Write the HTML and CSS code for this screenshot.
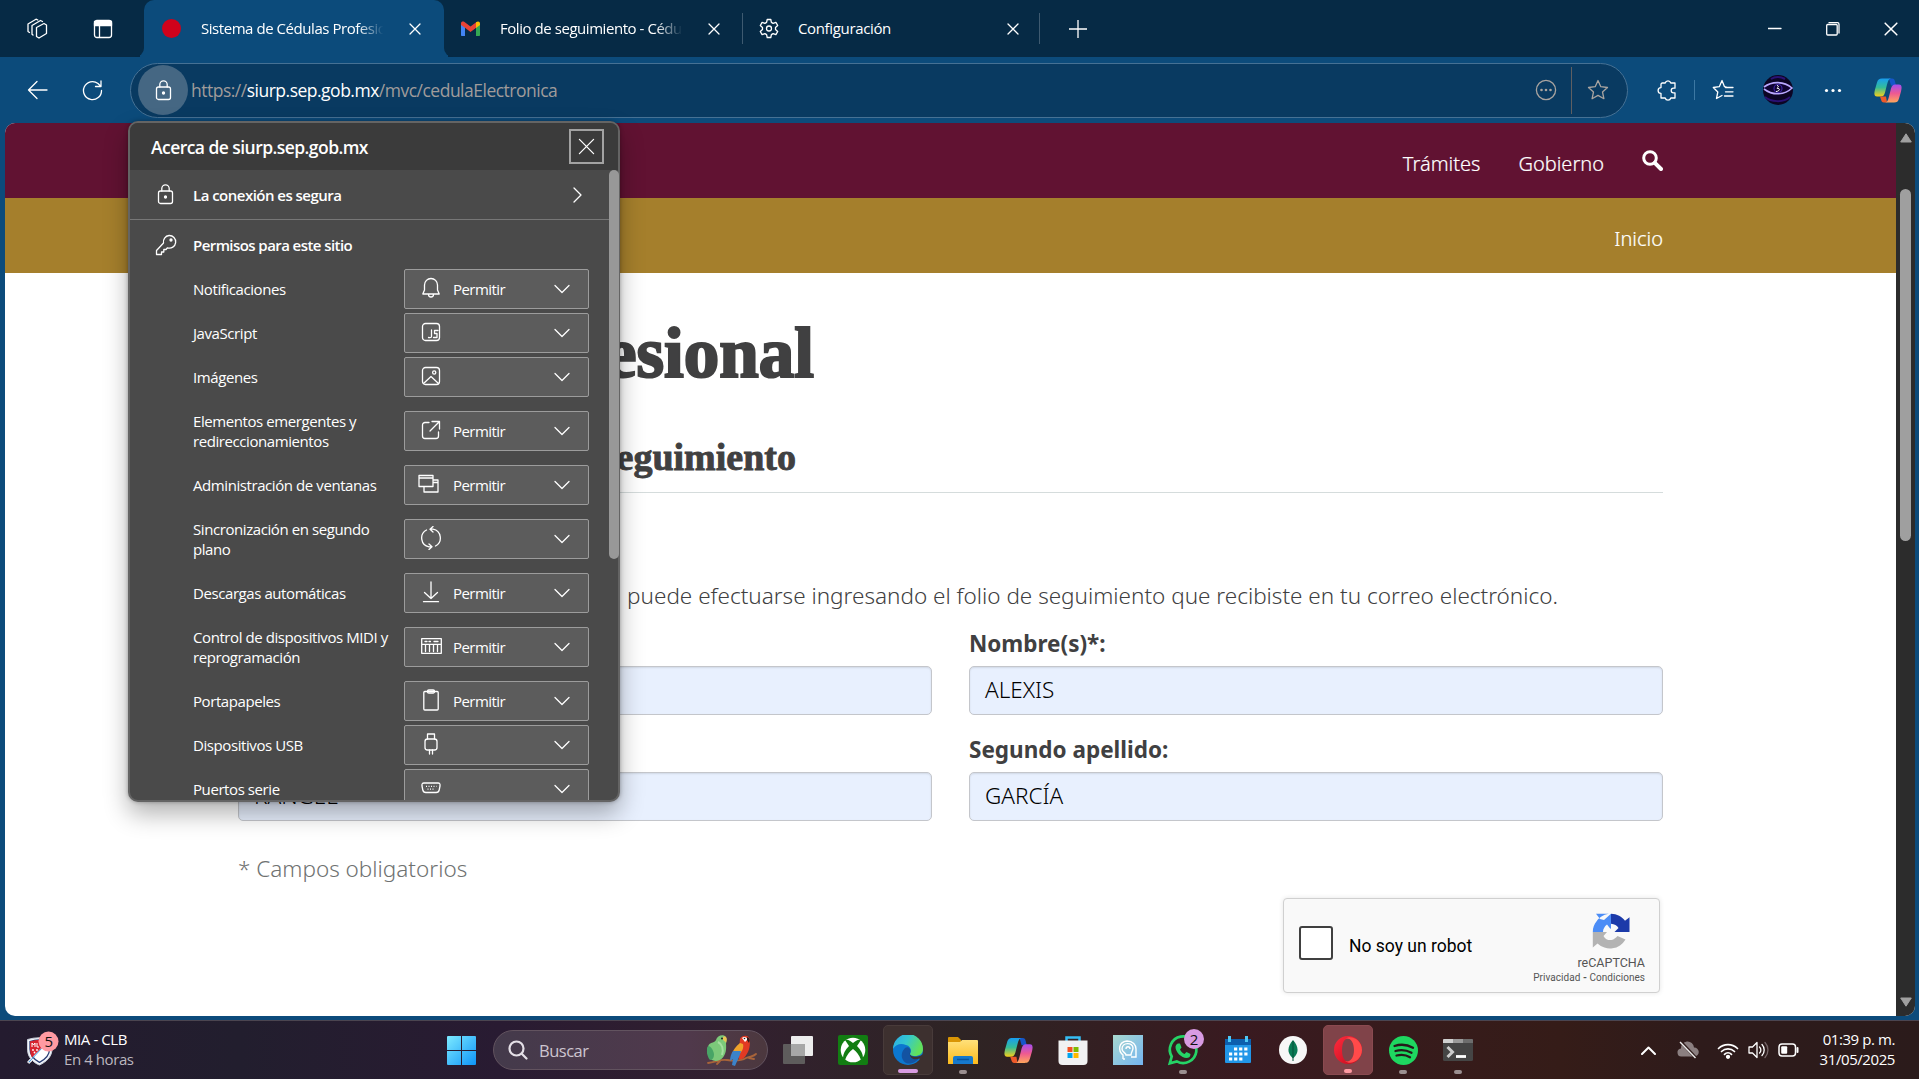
FILE: index.html
```html
<!DOCTYPE html>
<html lang="es">
<head>
<meta charset="utf-8">
<title>Sistema de Cédulas Profesionales</title>
<link rel="stylesheet" href="styles.css">
</head>
<body>
<svg class="defs" width="0" height="0">
  <defs>
    <linearGradient id="cpBlue" x1="0" y1="0" x2="0" y2="1"><stop offset="0" stop-color="#189df0"/><stop offset=".5" stop-color="#35bd98"/><stop offset="1" stop-color="#f6cf19"/></linearGradient>
    <linearGradient id="cpPink" x1="0" y1="0" x2="0" y2="1"><stop offset="0" stop-color="#a44ef0"/><stop offset=".5" stop-color="#ee5a91"/><stop offset="1" stop-color="#ffa65c"/></linearGradient>
    <linearGradient id="win" x1="0" y1="0" x2="1" y2="1"><stop offset="0" stop-color="#7deaff"/><stop offset="1" stop-color="#0e94f8"/></linearGradient>
    <linearGradient id="edgeTop" x1="0" y1="0" x2="1" y2=".4"><stop offset="0" stop-color="#2aa8ea"/><stop offset=".5" stop-color="#34c8cf"/><stop offset="1" stop-color="#62e05a"/></linearGradient>
    <linearGradient id="folder" x1="0" y1="0" x2="0" y2="1"><stop offset="0" stop-color="#ffe07a"/><stop offset="1" stop-color="#fdbb1c"/></linearGradient>
    <linearGradient id="opera" x1="0" y1="0" x2="1" y2="1"><stop offset="0" stop-color="#ff2b3d"/><stop offset="1" stop-color="#c20a1c"/></linearGradient>
    <linearGradient id="ai" x1="0" y1="0" x2="1" y2="1"><stop offset="0" stop-color="#a8d8cf"/><stop offset="1" stop-color="#74b4f0"/></linearGradient>
    <symbol id="x" viewBox="0 0 12 12"><path d="M1 1l10 10M11 1L1 11"/></symbol>
    <symbol id="down" viewBox="0 0 16 10"><path d="M1 1.500l7 7 7-7"/></symbol>
    <symbol id="lock" viewBox="0 0 16 21"><rect x="1" y="7" width="14" height="12.500" rx="2"/><path d="M4.300 7V4.500a3.700 3.700 0 0 1 7.400 0V7"/><circle cx="8" cy="13" r="1" fill="#fff"/></symbol>
    <symbol id="copilot" viewBox="0 0 28 26">
      <path d="M15 1h3c2 0 2.500 1 3 3l1 4h-5z" fill="#1556c9"/>
      <path d="M8 1h9c-2 0-3 2-4 6l-2 8c-1 3-2 4-4 4H3c-3 0-3-3-2-7l2-7c1-3 2-4 5-4z" fill="url(#cpBlue)"/>
      <path d="M13 25h-3c-2 0-2.500-1-3-3l-1-3h6z" fill="#ee5a2a"/>
      <path d="M20 25h-9c2 0 3-2 4-6l2-8c1-3 2-4 4-4h4c3 0 3 3 2 7l-2 7c-1 3-2 4-5 4z" fill="url(#cpPink)"/>
    </symbol>
  </defs>
</svg>

<div class="tabstrip">
  <div class="strip-left">
    <svg class="ic" width="22" height="22" viewBox="0 0 22 22"><path d="M10.500 9.500l7.500-4 2.500 1.500v8.500l-7.500 4.500-2.500-1.500zM7 17l-1-.8V7.500l8.500-5 2 1M3.500 14.500L2 13.500V6l8-4.800 1.800.8"/></svg>
    <svg class="ic" width="20" height="20" viewBox="0 0 20 20"><rect x="1.500" y="1.500" width="17" height="17" rx="2.500"/><path d="M1.500 2.500h17v4h-17z" fill="#fff"/><path d="M6.500 6v12"/></svg>
  </div>
  <div class="tab tab-active">
    <span class="red-dot"></span>
    <span class="tab-title fade-a">Sistema de Cédulas Profesio</span>
    <svg class="ic tab-x" width="12" height="12"><use href="#x"/></svg>
  </div>
  <div class="tab tab-gmail">
    <svg width="19" height="15" viewBox="0 0 19 15"><path d="M0 2v12c0 .6.400 1 1 1h3V6z" fill="#4285f4"/><path d="M19 2v12c0 .6-.4 1-1 1h-3V6z" fill="#34a853"/><path d="M0 2.500C0 .5 2 0 3.500 1L9.500 5.500 15.500 1v5.500l-6 4.500L4 6.800 0 4z" fill="#ea4335"/><path d="M15 1.300C17-.3 19 .6 19 2.500V4l-4 3z" fill="#fbbc04"/></svg>
    <span class="tab-title fade-b">Folio de seguimiento - Cédu</span>
    <svg class="ic tab-x" width="12" height="12"><use href="#x"/></svg>
  </div>
  <div class="tab tab-conf">
    <svg class="ic" width="22" height="22" viewBox="0 0 22 22"><path d="M9.200 1.500h3.600l.6 2.900 1.700 1 2.800-1 1.800 3.100-2.200 2v2l2.200 2-1.800 3.100-2.800-1-1.700 1-.6 2.900H9.200l-.6-2.900-1.700-1-2.800 1-1.800-3.100 2.200-2v-2l-2.200-2 1.800-3.100 2.800 1 1.700-1z"/><circle cx="11" cy="10.500" r="2.500"/></svg>
    <span class="tab-title conf-title">Configuración</span>
    <svg class="ic tab-x" width="12" height="12"><use href="#x"/></svg>
  </div>
  <svg class="ic plus" width="18" height="18" viewBox="0 0 18 18"><path d="M9 0v18M0 9h18"/></svg>
  <div class="win-buttons">
    <svg class="ic" width="14" height="14" viewBox="0 0 14 14"><path d="M0 6.500h13"/></svg>
    <svg class="ic" width="14" height="14" viewBox="0 0 14 14"><rect x=".7" y="2.500" width="10.500" height="10.500" rx="1"/><path d="M3 .7h8.500a1.500 1.500 0 0 1 1.500 1.500V11"/></svg>
    <svg class="ic" width="14" height="14" viewBox="0 0 12 12"><use href="#x"/></svg>
  </div>
</div>

<div class="toolbar">
  <svg class="ic back" width="21" height="20" viewBox="0 0 21 20"><path d="M20 10H1.500M10 1.500L1.500 10l8.500 8.500"/></svg>
  <svg class="ic reload" width="21" height="21" viewBox="0 0 21 21"><path d="M19.500 10.500a9 9 0 1 1-3.500-7l2.500 2.500M19 1v5.500h-5.500"/></svg>
  <div class="address">
    <span class="lock-circle"><svg class="ic" width="17" height="21"><use href="#lock"/></svg></span>
    <span class="url">https://<b>siurp.sep.gob.mx</b>/mvc/cedulaElectronica</span>
    <svg class="ic dim" width="22" height="22" viewBox="0 0 22 22"><circle cx="11" cy="11" r="9.600"/><g fill="#a9a4a0" stroke="none"><circle cx="6.500" cy="11" r="1.300"/><circle cx="11" cy="11" r="1.300"/><circle cx="15.500" cy="11" r="1.300"/></g></svg>
    <span class="addr-sep"></span>
    <svg class="ic dim" width="22" height="22" viewBox="0 0 22 22"><path d="M11 1.500l2.800 6.200 6.700.8-5 4.500 1.400 6.700-5.900-3.300-5.900 3.300L6.500 13l-5-4.500 6.700-.8z"/></svg>
  </div>
  <div class="tools">
    <svg class="ic t-puzzle" width="20" height="22" viewBox="0 0 20 22"><path d="M5 4h3.200a2.900 2.900 0 0 1 5.600 0H18v5.200h-1.500a2.300 2.300 0 0 0 0 4.600H18V19h-4.200a2.900 2.900 0 0 1-5.600 0H4v-4.600a2.900 2.900 0 0 1 0-5.800V5z"/></svg>
    <span class="tool-sep"></span>
    <svg class="ic t-fav" width="22" height="22" viewBox="0 0 22 22"><path d="M14 8l-1.500-.3L10 1.500 7.300 7.700l-6 .8 4.500 4.500-1.300 6.500 5.500-3M13.500 8.500H21M13.500 12.800H21M12.500 17H21"/></svg>
    <svg class="t-avatar" width="30" height="30" viewBox="0 0 30 30"><circle cx="15" cy="15" r="15" fill="#0c0524"/><path d="M2 22c6 5 18 6 25 0M8 4c5-3 10-2 14 0" stroke="#2a1175" stroke-width="2" fill="none"/><path d="M1 12c8-6 20-6 28 1-7 7-19 8-28 1" fill="#100432" stroke="#b9a8ff" stroke-width="1.600"/><circle cx="15" cy="13.500" r="4" fill="none" stroke="#3b24a0" stroke-width="1.200"/><path d="M14 10.500c4 1-2 3 1 3s1 3-2 3" stroke="#fff" fill="none"/></svg>
    <svg class="t-more" width="18" height="5" viewBox="0 0 18 5" fill="#fff"><circle cx="2.500" cy="2.500" r="1.600"/><circle cx="9" cy="2.500" r="1.600"/><circle cx="15.500" cy="2.500" r="1.600"/></svg>
    <svg class="t-copilot" width="28" height="27"><use href="#copilot"/></svg>
  </div>
</div>

<div class="viewport">
  <main class="page">
    <nav class="nav-main">
      <span>Trámites</span><span>Gobierno</span>
      <svg width="21" height="21" viewBox="0 0 21 21" fill="none" stroke="#fff"><circle cx="8" cy="8" r="6.300" stroke-width="3"/><path d="M12.800 12.800l6.200 6.200" stroke-width="4" stroke-linecap="round"/></svg>
    </nav>
    <nav class="nav-sub"><span>Inicio</span></nav>
    <div class="container">
      <h1>esional</h1>
      <h2>eguimiento</h2>
      <p class="intro">puede efectuarse ingresando el folio de seguimiento que recibiste en tu correo electrónico.</p>
      <div class="fields">
        <div class="group"><span class="field"></span></div>
        <label class="group">Nombre(s)*:<span class="field">ALEXIS</span></label>
        <div class="group"><span class="field">RANGEL</span></div>
        <label class="group">Segundo apellido:<span class="field">GARCÍA</span></label>
      </div>
      <p class="required">* Campos obligatorios</p>
      <div class="captcha">
        <span class="check"></span>
        <span class="robot">No soy un robot</span>
        <div class="brand">
          <svg width="38" height="38" viewBox="0 0 38 38"><path d="M19 .8C13 .8 8 3.500 4.800 8 2 11 .8 15 .8 19H11c0-3 1.500-5.500 4-7.500l3.500 4.500.5-1zM4 .8h15L12 7 8 6z" fill="#4c8df6"/><path d="M19 .8c6 0 11 3 14 7l4.500-3.500V19H22.500l4-4c-1.500-2.500-4-4-7.500-4.300z" fill="#1c3aa9"/><path d="M.8 19H15l-3.500 4c2 3.500 5 4.500 8 4 2.500-.5 4-2 6-4l8 3.500a18 18 0 0 1-28 4l-4.700 4z" fill="#b3b3b3"/></svg>
          <span class="rc">reCAPTCHA</span>
          <span class="terms">Privacidad <b>-</b> Condiciones</span>
        </div>
      </div>
    </div>
  </main>
  <div class="scrollbar">
    <svg width="12" height="10" viewBox="0 0 12 10"><path d="M6 .8L11.300 9H.7z" fill="#a0a0a0" stroke="#a0a0a0" stroke-linejoin="round"/></svg>
    <span class="thumb"></span>
    <svg width="12" height="10" viewBox="0 0 12 10"><path d="M6 9.200L11.300 1H.7z" fill="#a0a0a0" stroke="#a0a0a0" stroke-linejoin="round"/></svg>
  </div>
</div>

<section class="popup">
  <header>
    <span class="about">Acerca de siurp.sep.gob.mx</span>
    <span class="close"><svg class="ic" width="17" height="17" viewBox="0 0 12 12"><path d="M1 1l10 10M11 1L1 11" stroke-width=".9"/></svg></span>
  </header>
  <div class="pop-body">
    <div class="secure"><svg class="ic" width="17" height="21"><use href="#lock"/></svg><span>La conexión es segura</span><svg class="ic" width="9" height="16" viewBox="0 0 9 16"><path d="M1 1l7 7-7 7"/></svg></div>
    <div class="perm-title"><svg class="ic" width="22" height="22" viewBox="0 0 22 22"><path d="M14 1.500a6.300 6.300 0 1 1-1.500 12.300L11 15.500H8.800V18H6.500v2.500h-5v-4l7-7.500A6.300 6.300 0 0 1 14 1.500z"/><circle cx="16" cy="6" r="1" fill="#fff"/></svg><span>Permisos para este sitio</span></div>
    <div class="perm"><span>Notificaciones</span><div class="select"><svg class="ic" width="20" height="22" viewBox="0 0 20 22"><path d="M10 1.500a6.500 6.500 0 0 0-6.500 6.500v5L1.800 17h16.400l-1.700-4V8A6.500 6.500 0 0 0 10 1.500zM7.500 17.500a2.500 2.500 0 0 0 5 0"/></svg><b>Permitir</b><svg class="ic" width="16" height="10"><use href="#down"/></svg></div></div>
    <div class="perm"><span>JavaScript</span><div class="select"><svg class="ic" width="20" height="20" viewBox="0 0 20 20"><rect x="1.500" y="1.500" width="17" height="17" rx="3"/><path d="M10.500 8v6.500q0 1.500-3 1M17 8.500h-3.500v3H16V15.500h-3.500"/></svg><b></b><svg class="ic" width="16" height="10"><use href="#down"/></svg></div></div>
    <div class="perm"><span>Imágenes</span><div class="select"><svg class="ic" width="20" height="20" viewBox="0 0 20 20"><rect x="1.500" y="1.500" width="17" height="17" rx="3"/><circle cx="13.200" cy="6.500" r="1.600"/><path d="M2.500 17.500L10 10.500l7.500 7"/></svg><b></b><svg class="ic" width="16" height="10"><use href="#down"/></svg></div></div>
    <div class="perm tall"><span>Elementos emergentes y redireccionamientos</span><div class="select"><svg class="ic" width="20" height="20" viewBox="0 0 20 20"><path d="M8 2.500H4A2.500 2.500 0 0 0 1.500 5v11A2.500 2.500 0 0 0 4 18.500h11a2.500 2.500 0 0 0 2.500-2.500v-4M11 1.500h7.500V9M18.500 1.500L9 11"/></svg><b>Permitir</b><svg class="ic" width="16" height="10"><use href="#down"/></svg></div></div>
    <div class="perm tall"><span>Administración de ventanas</span><div class="select"><svg class="ic wide" width="22" height="20" viewBox="0 0 22 20"><path d="M1 1.500h14v11H1zM1 4h14M15 6h5v12H6v-5.500M15 8.500h5"/></svg><b>Permitir</b><svg class="ic" width="16" height="10"><use href="#down"/></svg></div></div>
    <div class="perm tall"><span>Sincronización en segundo plano</span><div class="select"><svg class="ic" width="20" height="24" viewBox="0 0 20 24"><path d="M5.500 4A9 9 0 0 0 8 20.800h3M14.500 20A9 9 0 0 0 12 3.200H9M12 .5L9 3.200 12 6M8 18l3 2.800L8 23.500"/></svg><b></b><svg class="ic" width="16" height="10"><use href="#down"/></svg></div></div>
    <div class="perm tall"><span>Descargas automáticas</span><div class="select"><svg class="ic" width="20" height="22" viewBox="0 0 20 22"><path d="M10 1v16.500M3.500 11.500l6.500 6 6.500-6M2.500 20.700h15"/></svg><b>Permitir</b><svg class="ic" width="16" height="10"><use href="#down"/></svg></div></div>
    <div class="perm tall"><span>Control de dispositivos MIDI y reprogramación</span><div class="select"><svg class="ic midi" width="21" height="16" viewBox="0 0 21 16"><path d="M.7.7h19.600v14.600H.7zM.7 6.300h19.600M4.500 6.500v7M8.500 6.500v7M12.500 6.500v7M16.500 6.500v7M4 3.500h2M8 3.500h1.500M13 3.500h4"/></svg><b>Permitir</b><svg class="ic" width="16" height="10"><use href="#down"/></svg></div></div>
    <div class="perm tall"><span>Portapapeles</span><div class="select"><svg class="ic" width="20" height="22" viewBox="0 0 20 22"><rect x="2.800" y="2.500" width="14.400" height="18.500" rx="1"/><rect x="6.500" y="1" width="7" height="3" rx="1.300"/></svg><b>Permitir</b><svg class="ic" width="16" height="10"><use href="#down"/></svg></div></div>
    <div class="perm"><span>Dispositivos USB</span><div class="select"><svg class="ic" width="20" height="22" viewBox="0 0 20 22"><path d="M6.500 6V1h7v5M8.500 17v4M11.500 17v4"/><rect x="4" y="6" width="12" height="11" rx="2.500"/></svg><b></b><svg class="ic" width="16" height="10"><use href="#down"/></svg></div></div>
    <div class="perm"><span>Puertos serie</span><div class="select"><svg class="ic" width="20" height="12" viewBox="0 0 20 12"><path d="M3 1h14q2.500 0 2 3l-.8 4q-.5 2.500-3 2.500H4.800q-2.500 0-3-2.500L1 4Q.5 1 3 1z"/><path d="M5 4.300h10.500M6.500 7.200h7.500" stroke-dasharray="1 1.500" stroke-linecap="butt"/></svg><b></b><svg class="ic" width="16" height="10"><use href="#down"/></svg></div></div>
  </div>
  <span class="pop-thumb"></span>
</section>

<footer class="taskbar">
  <div class="widget">
    <svg width="46" height="40" viewBox="0 0 46 40"><path d="M6.500 10.500Q18 7 31 10.500V20c0 8-6 13-12.500 16-3-1-5-2.500-7-4.500L8 34.500 6.500 33l3-3.500C7 26 6.500 23 6.500 19z" fill="#f4f7fb" stroke="#c9cfdb" stroke-width="1"/><path d="M9 12.500Q18 9.500 28.500 12.500V20c0 6.500-4.500 10.500-10 13.300C12 30 9 26 9 20z" fill="#fff" stroke="#2b3e74" stroke-width="1.300"/><path d="M9 12.500Q18 9.500 27 12L11 28.500Q9 25 9 20z" fill="#d8232f"/><path d="M8 33L27.500 12" stroke="#3d9be0" stroke-width="1"/><path d="M11 18v-4l1.500 2 1.500-2v4M16 14v4h2" stroke="#fff" fill="none"/><g fill="#fff"><circle cx="12" cy="21" r=".9"/><circle cx="16" cy="21" r=".9"/><circle cx="13.500" cy="23.500" r=".9"/></g><circle cx="27.500" cy="12.500" r="10" fill="#ff9aa2"/><text x="23.500" y="18" class="badge-text">5</text></svg>
    <div class="two-lines"><span>MIA - CLB</span><span class="muted">En 4 horas</span></div>
  </div>
  <svg class="start" width="29" height="29" viewBox="0 0 29 29" fill="url(#win)"><path d="M0 1q0-1 1-1h13v14H0zM15 0h13q1 0 1 1v13H15zM0 15h14v14H1q-1 0-1-1zM15 15h14v13q0 1-1 1H15z"/></svg>
  <div class="search">
    <svg width="20" height="20" viewBox="0 0 20 20" fill="none" stroke="#e4dfe6" stroke-width="2.200" stroke-linecap="round"><circle cx="8.500" cy="8.500" r="7"/><path d="M13.500 13.500l5 5"/></svg>
    <span>Buscar</span>
    <svg width="52" height="32" viewBox="0 0 52 32">
      <path d="M2 29c8-1 12-4 19-3s14 1 19-2c4-2 7-1 10-4M43 24l5 1M14 27l-3 3" stroke="#a8643a" stroke-width="1.800" fill="none" stroke-linecap="round"/>
      <path d="M10 6c1-4 5-5.500 8-4.500 2.500 1 3 4 2 8 .5 6 0 11-4 15-3 3-8 3-11 1-4-4-5-11-2-15 2-2 6-2 7-4.500z" fill="#7cc97a"/>
      <path d="M2 12c3 0 6 5 6 9 0 3-2 5-4 5-3-3-4-10-2-14z" fill="#48a566"/>
      <path d="M12 8c4 2 6 7 4 13" stroke="#a5dea0" stroke-width="2" fill="none"/>
      <path d="M17 3c3-1.500 5 1 3 6-1-2-2-2-3-3z" fill="#e9c454"/><circle cx="16" cy="4.500" r="1" fill="#222"/>
      <path d="M34 5c2-4 8-4.500 9.500-.5 1 5 0 12-3 16-2 4-6 6-8 4z" fill="#e23a23"/>
      <path d="M34 9c-4 3-7 7-8 11l6 1c4-3 6-7 5-11z" fill="#f0a32b"/>
      <path d="M27 17l8 0c-1 5-4 10-6 15l-3-1 1-6-3 2c0-4 1-7 3-10z" fill="#3c83c9"/>
      <path d="M36 4c2-2 5-1 5.500 1.500L39 8z" fill="#fff"/><circle cx="38.500" cy="4.500" r=".8" fill="#222"/>
      <path d="M41 3q4 1 2 6l-2-3z" fill="#2b1c1c"/>
    </svg>
  </div>
  <div class="apps">
    <span class="app"><svg width="30" height="30" viewBox="0 0 30 30"><rect x="8" y="1" width="22" height="20" rx="1" fill="#ededed"/><rect y="9" width="22" height="20" rx="1" fill="#5e5c5c"/><path d="M8 9h14v12H8z" fill="#a7a7a7"/></svg></span>
    <span class="app"><svg width="30" height="30" viewBox="0 0 30 30"><rect width="30" height="30" rx="2" fill="#127d12"/><circle cx="15" cy="15" r="12.300" fill="#fff"/><path d="M7 5c3-1 5 .5 8 3 3-2.500 5-4 8-3l-4 6c4 4 6 8 6 12l-2 2c-2-5-4-8-8-11-4 3-6 6-8 11l-2-2c0-4 2-8 6-12z" fill="#127d12"/></svg></span>
    <span class="app tile"><svg width="30" height="30" viewBox="0 0 30 30"><circle cx="15" cy="15" r="15" fill="#0c77cf"/><path d="M0 14A15 15 0 0 1 30 14c0 5-4 7-8 7-4 0-5-1-5-2 2-3 1-8-4-9C8 8 3 9 0 14z" fill="url(#edgeTop)"/><path d="M17 18c-1 3 5 5 11 3-4 6-10 9-15 7-5-3-6-10-1-15 3-2 7 1 5 5z" fill="#1353a2"/><path d="M17 17.500c-1.500 3 3 4.500 6 4.300 3 0 5-1 6.500-2.500L30 25l-4-1.500c-5 2-10 0-9-6z" fill="#3d302f"/></svg><i class="on"></i></span>
    <span class="app"><svg width="30" height="30" viewBox="0 0 30 30"><path d="M0 3q0-1 1-1h9l3 3v4H0z" fill="#d99505"/><path d="M0 7h12l2-2h15q1 0 1 1v23H0z" fill="url(#folder)"/><path d="M5 29v-6q0-2 2-2h16q2 0 2 2v6z" fill="#1679cc"/><path d="M9 24.500h12" stroke="#09559f" stroke-width="1.500"/></svg><i></i></span>
    <span class="app"><svg width="29" height="27"><use href="#copilot"/></svg></span>
    <span class="app"><svg width="30" height="30" viewBox="0 0 30 30"><path d="M8.500 6V2.500h13V6" fill="none" stroke="#36bdf4" stroke-width="2.500"/><path d="M.5 5.500h29V26q0 4-4 4h-21q-4 0-4-4z" fill="#f1f1f2"/><path d="M9.500 12h5v5h-5z" fill="#f25022"/><path d="M15.500 12h5v5h-5z" fill="#7fba00"/><path d="M9.500 18h5v5h-5z" fill="#00a4ef"/><path d="M15.500 18h5v5h-5z" fill="#ffb900"/></svg></span>
    <span class="app"><svg width="30" height="30" viewBox="0 0 30 30"><path d="M0 0h30v30H0z" fill="url(#ai)"/><path d="M10 24v-4c-5-4-5-13 4-14 6 0 9 4 9 8v8h-5M12 24h-2M9 14c0-7 11-7 11-1 0 3-2 4-2 7h-5c0-2-4-3-4-6zM13 14c0-3 4-3 4 0" fill="none" stroke="#fff" stroke-width="1.400"/></svg></span>
    <span class="app"><svg class="spill" width="30" height="30" viewBox="0 0 30 30"><path d="M1.800 28.300l1.900-6.800A13.300 13.300 0 1 1 8.800 26.400z" fill="none" stroke="#25d366" stroke-width="2.700"/><path d="M10 8.500l2 0 1.500 4-1.500 2c1 2 2.500 3.500 4.500 4.500l2-2 4 2c0 3-2 4-4 4-5 0-11-6-11-11 0-1.500 1-3 2.500-3.500z" fill="#25d366"/><circle cx="26" cy="4" r="10" fill="#d89be2"/><text x="21.700" y="9.500" class="badge-text">2</text></svg><i></i></span>
    <span class="app"><svg width="28" height="28" viewBox="0 0 28 28"><path d="M1 4q0-1 1-1h24q1 0 1 1v22q0 1-1 1H2q-1 0-1-1z" fill="#2196e8"/><path d="M1 4q0-1 1-1h24q1 0 1 1v5H1z" fill="#0c5fae"/><path d="M5.500 0v6M22.500 0v6" stroke="#4cc8f6" stroke-width="3"/><path d="M10 13h14M5 18h19M5 23h14" stroke="#fff" stroke-width="3.200" stroke-dasharray="3.200 1.900"/></svg></span>
    <span class="app"><svg width="28" height="28" viewBox="0 0 28 28"><circle cx="14" cy="14" r="14" fill="#f7f7f7"/><path d="M14 4c6 7 6 13 .5 18h-1C8 17 8 11 14 4z" fill="#0b7a55"/><path d="M14 5v20" stroke="#07503a"/></svg></span>
    <span class="app tile opera"><svg width="30" height="30" viewBox="0 0 30 30"><path fill-rule="evenodd" d="M15 1a14 14 0 1 0 0 28 14 14 0 0 0 0-28zm0 2.500c4 0 6 5 6 11.500s-2 11.500-6 11.500-6-5-6-11.500 2-11.500 6-11.500z" fill="url(#opera)"/><path d="M12 4c6-5 17 1 17 11s-11 16-17 11c5 2 9-3 9-11s-4-13-9-11z" fill="#ff4a4a"/></svg><i></i></span>
    <span class="app"><svg width="29" height="29" viewBox="0 0 29 29"><circle cx="14.500" cy="14.500" r="14.500" fill="#1ed760"/><path d="M5.500 10c6-2 13-1.300 18.500 1.700M6.500 15c5-1.500 11-1 16 1.700M7.500 19.500c4-1 9.500-.8 13.500 1.700" fill="none" stroke="#26191a" stroke-width="2.300" stroke-linecap="round"/></svg><i></i></span>
    <span class="app"><svg width="30" height="22" viewBox="0 0 30 22"><rect width="30" height="22" rx="1.500" fill="#454545"/><path d="M0 4V1q0-1 1-1h9v4z" fill="#d0d0d0"/><path d="M10 0h10v4H10z" fill="#9a9a9a"/><path d="M20 0h9q1 0 1 1v3H20z" fill="#6d6d6d"/><path d="M4.500 8l5 5-5 5" fill="none" stroke="#ccc" stroke-width="3"/><path d="M13 17.500h10" stroke="#fff" stroke-width="2.800"/></svg><i></i></span>
  </div>
  <div class="tray">
    <svg class="ic bold" width="15" height="9" viewBox="0 0 15 9"><path d="M1 8l6.500-6.500L14 8"/></svg>
    <svg width="22" height="18" viewBox="0 0 22 18"><path d="M5 15.500a4 4 0 0 1-1-8 6.500 6.500 0 0 1 13-1 4.500 4.500 0 0 1 .5 9z" fill="#8b7f80"/><path d="M4 1l15 16" stroke="#2f1c1b" stroke-width="3"/><path d="M3 1l15.500 16" stroke="#eee" stroke-width="1.400"/></svg>
    <svg class="ic" width="22" height="17" viewBox="0 0 22 17"><path d="M1.500 6.500a13.500 13.500 0 0 1 19 0M4.500 9.500a9.200 9.200 0 0 1 13 0M7.500 12.300a5 5 0 0 1 7 0" stroke-width="1.700"/><circle cx="11" cy="14.800" r="1.500" fill="#fff"/></svg>
    <svg class="ic" width="21" height="18" viewBox="0 0 21 18"><path d="M1 6h3.500l4.500-4.500v15L4.500 12H1zM11.500 6a4 4 0 0 1 0 6M14 3.500a8 8 0 0 1 0 11"/><path d="M17 1.500a11 11 0 0 1 0 15" stroke="#756567"/></svg>
    <svg class="ic" width="21" height="14" viewBox="0 0 21 14"><rect x="1" y="1" width="16.500" height="12" rx="3" stroke-width="1.500"/><rect x="3.200" y="3.200" width="6" height="7.600" rx="1" fill="#fff" stroke="none"/><path d="M19.500 5v4" stroke-width="2"/></svg>
    <div class="two-lines clock"><span>01:39 p. m.</span><span>31/05/2025</span></div>
  </div>
</footer>
</body>
</html>
```
FILE: styles.css
```css
* { box-sizing: border-box; }
body {
  margin: 0;
  width: 1919px;
  height: 1079px;
  overflow: hidden;
  position: relative;
  display: flex;
  flex-direction: column;
  background: #0c4b7b;
  color: #fff;
  font-family: "Open Sans", "Noto Sans", sans-serif;
  font-size: 15px;
}
.defs { position: absolute; }
svg { flex: none; display: block; }
.ic { fill: none; stroke: #fff; stroke-width: 1.3; stroke-linejoin: round; stroke-linecap: round; }
.dim { stroke: #a9a4a0; }

/* Tab strip */
.tabstrip { height: 57px; background: linear-gradient(90deg, #062a45 140px, #0c4b7b 140px, #0c4b7b 448px, #062a45 448px); display: flex; align-items: center; }
.strip-left {
  width: 144px; height: 57px; padding-left: 26px;
  display: flex; align-items: center; gap: 45px;
  border-bottom-right-radius: 9px; background: #062a45;
}
.tab { height: 57px; display: flex; align-items: center; }
.tab-active { width: 300px; padding-left: 18px; background: linear-gradient(#062a45, #062a45) 0 0 / 100% 12px no-repeat, #0c4b7b; position: relative; z-index: 0; }
.tab-active::before { content: ""; position: absolute; inset: 0; z-index: -1; background: #0c4b7b; border-radius: 10px 10px 0 0; }
.red-dot { width: 19px; height: 19px; border-radius: 50%; background: #d0021b; margin-right: 20px; }
.tab-title { white-space: nowrap; overflow: hidden; letter-spacing: -.45px; font-size: 15px; line-height: 22px; margin-top: -2px; }
.fade-a { width: 186px; margin-right: 22px; mask-image: linear-gradient(90deg, #000 84%, transparent 98%); }
.tab-gmail { width: 299px; padding-left: 17px; background: #062a45; border-bottom-left-radius: 9px; }
.fade-b { width: 186px; margin: -2px 22px 0 20px; mask-image: linear-gradient(90deg, #000 84%, transparent 98%); }
.tab-conf { width: 298px; margin-left: -1px; padding-left: 15px; border: solid #3e5a70; border-width: 0 1px; height: 31px; }
.conf-title { width: 190px; margin: -2px 19px 0 18px; letter-spacing: -.35px; }
.plus { margin-left: 29px; }
.win-buttons { margin-left: auto; padding-right: 21px; display: flex; gap: 44px; }

/* Toolbar */
.toolbar { height: 66px; display: flex; align-items: center; padding-left: 27px; }
.reload { margin: 0 27px 0 34px; }
.address {
  width: 1498px; height: 55px; border: 1px solid #467194; border-radius: 28px; background: #093a61;
  display: flex; align-items: center; padding-left: 7px;
}
.lock-circle { width: 50px; height: 50px; border-radius: 50%; background: #456783; display: grid; place-items: center; margin-right: 3px; }
.url { width: 1344px; color: #a09c9b; font-size: 17.5px; letter-spacing: -.5px; }
.url b { color: #fff; font-weight: 400; }
.addr-sep { width: 1px; height: 47px; background: #5f5f62; margin: 0 15px 0 14px; }
.tools { display: flex; align-items: center; }
.t-puzzle { margin-left: 29px; }
.tool-sep { width: 1px; height: 20px; background: #3d78a3; margin-left: 17px; }
.t-fav { margin-left: 17px; }
.t-avatar { margin-left: 29px; }
.t-more { margin-left: 31px; }
.t-copilot { margin-left: 32px; }

/* Web page */
.viewport { height: 893px; margin: 0 4px 0 5px; display: flex; border-radius: 10px; overflow: hidden; background: #fff; }
.page { width: 1891px; font-family: "Noto Sans", "Open Sans", sans-serif; font-size: 22.5px; font-weight: 300; color: #404041; }
.nav-main, .nav-sub {
  height: 75px; padding: 5px 233px 0 0; display: flex; justify-content: flex-end; align-items: center;
  color: #fff; font-size: 20px; font-weight: 300; -webkit-text-stroke: .2px #fff;
}
.nav-main { background: #611232; gap: 38px; }
.nav-main svg { margin-top: -5px; }
.nav-sub { background: #a57f2c; }
.container { width: 1425px; margin-left: 233px; }
h1, h2 { margin: 0; font-family: "Liberation Serif", serif; font-weight: 700; white-space: nowrap; text-align: right; }
h1 { width: 576px; padding-top: 37px; height: 143px; font-size: 71px; line-height: 86px; -webkit-text-stroke: 2.2px #404041; }
h2 { height: 77px; padding-top: 21px; padding-right: 867px; font-size: 38px; line-height: 40px; border-bottom: 1px solid #d5dcdc; -webkit-text-stroke: .9px #404041; }
.intro { margin: 0; padding: 86px 105px 0 0; height: 134px; text-align: right; line-height: 34px; white-space: nowrap; }
.fields { display: grid; grid-template-columns: 694px 694px; column-gap: 37px; }
.group { height: 106px; font-weight: 700; line-height: 32px; padding-top: 1px; display: flex; flex-direction: column; }
.field {
  display: block; height: 49px; margin-top: 6px; padding: 7px 15px; border: 1px solid #c4c6cb; border-radius: 5px;
  background: #e8f0fe; box-shadow: inset 0 1px 2px rgba(0,0,0,.1); color: #000; font-weight: 300;
}
div.group .field { margin-top: 38px; }
.required { margin: 13px 0 0; line-height: 34px; color: #6f7271; }
.captcha {
  width: 377px; height: 95px; margin: 12px 0 0 1045px; padding-left: 15px; display: flex; align-items: center;
  background: #f9f9f9; border: 1px solid #d0d0d0; border-radius: 4px; box-shadow: 0 0 5px rgba(0,0,0,.1);
  font-family: Roboto, sans-serif; font-weight: 400; color: #000;
}
.check { width: 34px; height: 34px; background: #fff; border: 2px solid #404040; border-radius: 3px; margin: -6px 16px 0 0; }
.robot { width: 168px; font-size: 17.5px; letter-spacing: 0; }
.brand { width: 128px; padding-top: 4px; display: flex; flex-direction: column; align-items: flex-end; color: #555; }
.brand svg { margin: 4px 15px 4px 0; }
.rc { font-size: 12.5px; line-height: 15px; padding-right: 0; letter-spacing: 0; }
.terms { font-size: 10px; line-height: 16px; white-space: nowrap; letter-spacing: .04px; }
.scrollbar { width: 19px; background: #2c2c2c; display: flex; flex-direction: column; align-items: center; padding: 10px 0 9px; }
.thumb { width: 11px; height: 352px; margin: 46px 0 auto; border-radius: 6px; background: #9f9f9f; }

/* Site information popup */
.popup {
  position: absolute; left: 128px; top: 121px; width: 492px; height: 681px;
  border: 2px solid #646464; border-radius: 10px; background: #4a4a4a; box-shadow: 0 12px 24px rgba(0,0,0,.3), 0 0 4px rgba(0,0,0,.3);
}
.popup header {
  height: 47px; background: #3b3b3b; border-radius: 8px 8px 0 0; display: flex; align-items: center;
  justify-content: space-between; padding: 0 14px 0 21px;
}
.about { font-size: 17.5px; font-weight: 600; letter-spacing: -.55px; }
.close { width: 35px; height: 35px; border: 2px solid #a2a2a2; display: grid; place-items: center; }
.pop-body { height: 630px; overflow: hidden; border-radius: 0 0 8px 8px; }
.secure, .perm-title { width: 479px; display: flex; align-items: center; font-weight: 600; letter-spacing: -.52px; }
.secure { height: 50px; padding-left: 27px; border-bottom: 1px solid #777; }
.secure span { width: 380px; margin-left: 19px; }
.perm-title { height: 47px; padding: 3px 0 0 25px; gap: 16px; letter-spacing: -.57px; }
.perm { width: 459px; height: 44px; padding-left: 63px; display: flex; align-items: center; justify-content: space-between; letter-spacing: -.42px; line-height: 20px; }
.perm > span { width: 206px; }
.tall { height: 54px; }
.perm:not(.tall) + .tall { margin-top: 5px; }
.tall + .perm:not(.tall) { margin-top: -5px; }
.select { width: 185px; height: 40px; border: 1px solid #9c9c9c; border-radius: 2px; background: #5c5c5c; display: flex; align-items: center; padding-left: 16px; }
.select > .ic:first-child { margin-top: -2px; }
.select b { width: 101px; margin-left: 12px; font-weight: 400; letter-spacing: -.55px; }
.select .wide { margin: -4px 1px 0 -3px; }
.select .midi { margin-right: -1px; }
.pop-thumb { position: absolute; left: 479px; top: 47px; width: 10px; height: 389px; border-radius: 5px; background: #989898; }

/* Taskbar */
.taskbar {
  height: 59px; margin-top: 4px; border-top: 1px solid #4b4550; display: flex; align-items: center;
  background: linear-gradient(90deg, #241b2f 0, #221e2e 240px, #291b32 500px, #32202f 740px, #2e2424 960px, #391a20 1240px, #351c18 1560px, #2e1b1b 1700px, #2b1b1b);
}
.widget { width: 447px; padding-left: 21px; display: flex; align-items: center; }
.widget svg { margin: -2px -3px 0 0; }
.badge-text { font-size: 15px; fill: #111; }
.two-lines { display: flex; flex-direction: column; line-height: 20px; letter-spacing: -.42px; margin-top: -3px; }
.muted { color: #bcb7bf; }
.search {
  width: 275px; height: 40px; margin: 0 5px 0 17px; padding-left: 14px; display: flex; align-items: center;
  border: 1px solid #62535f; border-radius: 20px; background: linear-gradient(90deg, #443a4b, #50394c 70%, #4c383e);
}
.search span { width: 155px; margin-left: 11px; font-size: 16.5px; letter-spacing: -.5px; color: #cdc5cf; }
.search svg:last-child { margin-left: 12px; }
.apps { display: flex; gap: 5px; }
.app { width: 50px; height: 50px; border-radius: 5px; display: grid; place-items: center; position: relative; }
.spill { overflow: visible; }
.tile { background: #3d302f; border: 1px solid #483b3a; }
.opera { background: #804349; border-color: #8a4a50; }
.app i { position: absolute; bottom: 1px; width: 8px; height: 4px; border-radius: 2px; background: #9b8f90; }
.app .on { width: 20px; background: #d89be2; }
.opera i { background: #ff9aa2; }
.tray { margin-left: auto; padding-right: 24px; display: flex; align-items: center; }
.bold { stroke-width: 2; margin-right: 21px; }
.tray svg:nth-child(2) { margin-right: 18px; }
.tray svg:nth-child(3), .tray svg:nth-child(4) { margin-right: 9px; }
.clock { text-align: right; width: 96px; }
```
